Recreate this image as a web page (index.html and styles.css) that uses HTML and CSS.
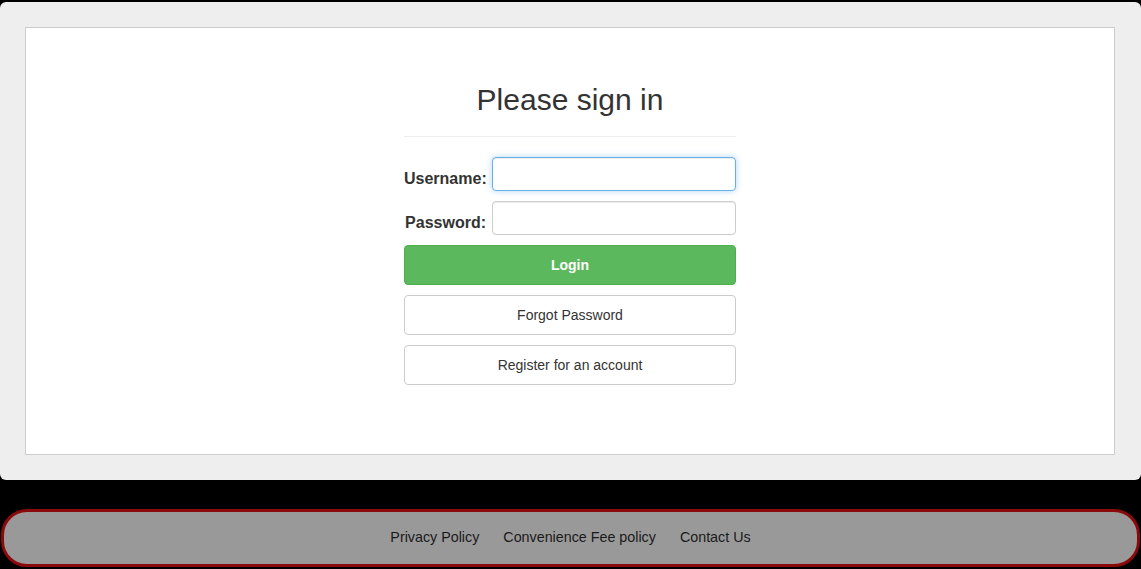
FILE: index.html
```html
<!DOCTYPE html>
<html lang="en">
<head>
  <meta charset="UTF-8" />
  <title>Sign in</title>
  <meta name="viewport" content="width=device-width, initial-scale=1.0" />
  <link rel="stylesheet" href="styles.css">
</head>
<body>

  <div class="page">
    <div class="panel">
      <form class="signin" onsubmit="return false;">
        <h1>Please sign in</h1>
        <hr />
        <div class="row">
          <label for="username">Username:</label>
          <input type="text" id="username" class="focused" />
        </div>
        <div class="row">
          <label for="password">Password:</label>
          <input type="password" id="password" />
        </div>
        <button class="btn btn-login">Login</button>
        <button class="btn">Forgot Password</button>
        <button class="btn">Register for an account</button>
      </form>
    </div>
  </div>

  <div class="footer">
    <a href="#">Privacy Policy</a>
    <a href="#">Convenience Fee policy</a>
    <a href="#">Contact Us</a>
  </div>

</body>
</html>
```

FILE: styles.css
```css
body {
  font-family: "Liberation Sans", Arial, sans-serif;
  background: #000;
  margin: 0;
  padding: 2px 0 0;
  color: #333;
}

.page {
  background: #eee;
  border-radius: 6px;
  padding: 25px 26px 25px 25px;
}

.panel {
  background: #fff;
  border: 1px solid #ccc;
  height: 426px;
  display: flex;
  justify-content: center;
}

.signin {
  width: 332px;
  display: flex;
  flex-direction: column;
}

h1 {
  font-size: 30px;
  font-weight: normal;
  text-align: center;
  margin: 55px 0 0;
  line-height: 34px;
}

hr {
  width: 100%;
  border: none;
  border-top: 1px solid #eee;
  margin: 19px 0 20px;
}

.row {
  display: flex;
  align-items: center;
  gap: 6px;
  margin-bottom: 10px;
}

label {
  width: 82px;
  text-align: right;
  font-size: 16px;
  font-weight: bold;
  padding-top: 9px;
}

input {
  flex: 1;
  height: 34px;
  box-sizing: border-box;
  border: 1px solid #ccc;
  border-radius: 4px;
  padding: 6px 12px;
  font-size: 14px;
  box-shadow: inset 0 1px 1px rgba(0,0,0,.075);
}

input.focused {
  border-color: #66afe9;
  box-shadow: inset 0 1px 1px rgba(0,0,0,.075), 0 0 6px rgba(102,175,233,.5);
  outline: none;
}

.btn {
  height: 40px;
  margin-bottom: 10px;
  background: #fff;
  border: 1px solid #ccc;
  border-radius: 4px;
  font-family: "Liberation Sans", Arial, sans-serif;
  font-size: 14px;
  color: #333;
  cursor: pointer;
}

.btn-login {
  background: #5cb85c;
  border-color: #4cae4c;
  color: #fff;
  font-weight: bold;
}

.footer {
  margin: 29px 1px 1px 1px;
  height: 50px;
  background: #999;
  border: 3px solid #8a0a0c;
  border-radius: 26px;
  display: flex;
  justify-content: center;
  align-items: center;
  gap: 24px;
  padding-bottom: 2px;
}

.footer a {
  color: #1a1a1a;
  text-decoration: none;
  font-size: 14.3px;
}
```
